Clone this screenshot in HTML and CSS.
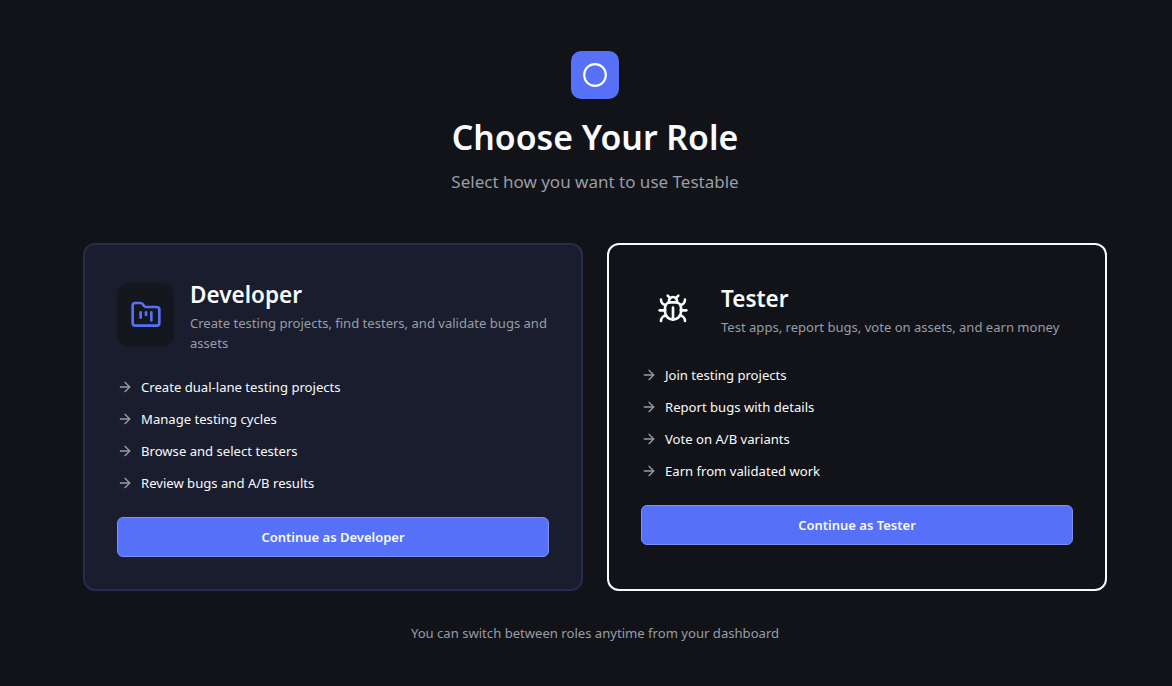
FILE: index.html
```html
<!DOCTYPE html>
<html lang="en">
<head>
    <meta charset="UTF-8">
    <meta name="viewport" content="width=device-width, initial-scale=1.0">
    <title>Choose Your Role</title>
    <link rel="stylesheet" href="styles.css">
</head>
<body>

<div class="container">
    <div class="header">
        <div class="logo">
            <svg class="logo-icon" viewBox="0 0 24 24"><circle cx="12" cy="12" r="10"></circle></svg>
        </div>
        <h1>Choose Your Role</h1>
        <p class="subtitle">Select how you want to use Testable</p>
    </div>

    <div class="roles">
        <div class="card card-developer">
            <div class="card-header">
                <div class="card-icon icon-developer">
                    <svg viewBox="0 0 24 24">
                        <path d="M4 20h16a2 2 0 0 0 2-2V8a2 2 0 0 0-2-2h-7.93a2 2 0 0 1-1.66-.9l-.82-1.2A2 2 0 0 0 7.93 3H4a2 2 0 0 0-2 2v13c0 1.1.9 2 2 2Z"></path>
                        <path d="M8 10v4"></path>
                        <path d="M12 10v2"></path>
                        <path d="M16 10v6"></path>
                    </svg>
                </div>
                <div>
                    <h2>Developer</h2>
                    <p class="card-desc">Create testing projects, find testers, and validate bugs and assets</p>
                </div>
            </div>
            <ul class="features">
                <li><svg viewBox="0 0 24 24"><path d="M5 12h14"></path><path d="m12 5 7 7-7 7"></path></svg>Create dual-lane testing projects</li>
                <li><svg viewBox="0 0 24 24"><path d="M5 12h14"></path><path d="m12 5 7 7-7 7"></path></svg>Manage testing cycles</li>
                <li><svg viewBox="0 0 24 24"><path d="M5 12h14"></path><path d="m12 5 7 7-7 7"></path></svg>Browse and select testers</li>
                <li><svg viewBox="0 0 24 24"><path d="M5 12h14"></path><path d="m12 5 7 7-7 7"></path></svg>Review bugs and A/B results</li>
            </ul>
            <button type="button">Continue as Developer</button>
        </div>

        <div class="card card-tester">
            <div class="card-header">
                <div class="card-icon icon-tester">
                    <svg viewBox="0 0 24 24">
                        <path d="m8 2 1.88 1.88"></path>
                        <path d="M14.12 3.88 16 2"></path>
                        <path d="M9 7.13v-1a3.003 3.003 0 1 1 6 0v1"></path>
                        <path d="M12 20c-3.3 0-6-2.7-6-6v-3a4 4 0 0 1 4-4h4a4 4 0 0 1 4 4v3c0 3.3-2.7 6-6 6"></path>
                        <path d="M12 20v-9"></path>
                        <path d="M6.53 9C4.6 8.8 3 7.1 3 5"></path>
                        <path d="M6 13H2"></path>
                        <path d="M3 21c0-2.1 1.7-3.9 3.8-4"></path>
                        <path d="M20.97 5c0 2.1-1.6 3.8-3.5 4"></path>
                        <path d="M22 13h-4"></path>
                        <path d="M17.2 17c2.1.1 3.8 1.9 3.8 4"></path>
                    </svg>
                </div>
                <div>
                    <h2>Tester</h2>
                    <p class="card-desc">Test apps, report bugs, vote on assets, and earn money</p>
                </div>
            </div>
            <ul class="features">
                <li><svg viewBox="0 0 24 24"><path d="M5 12h14"></path><path d="m12 5 7 7-7 7"></path></svg>Join testing projects</li>
                <li><svg viewBox="0 0 24 24"><path d="M5 12h14"></path><path d="m12 5 7 7-7 7"></path></svg>Report bugs with details</li>
                <li><svg viewBox="0 0 24 24"><path d="M5 12h14"></path><path d="m12 5 7 7-7 7"></path></svg>Vote on A/B variants</li>
                <li><svg viewBox="0 0 24 24"><path d="M5 12h14"></path><path d="m12 5 7 7-7 7"></path></svg>Earn from validated work</li>
            </ul>
            <button type="button">Continue as Tester</button>
        </div>
    </div>

    <p class="footnote">You can switch between roles anytime from your dashboard</p>
</div>

</body>
</html>
```

FILE: styles.css
```css
* {
    box-sizing: border-box;
}
html, body {
    height: 100%;
}
body {
    margin: 0;
    padding: 51px 0 0 18px;
    overflow: hidden;
    background: #111318;
    color: #f8fafc;
    font-family: "Noto Sans", "Liberation Sans", sans-serif;
}
svg {
    fill: none;
    stroke: currentColor;
    stroke-width: 2;
    stroke-linecap: round;
    stroke-linejoin: round;
}
.container {
    max-width: 1024px;
    margin: auto;
}
.header {
    display: flex;
    flex-direction: column;
    align-items: center;
    margin-bottom: 47px;
}
.logo {
    display: flex;
    justify-content: center;
    align-items: center;
    width: 48px;
    height: 48px;
    margin-bottom: 16px;
    border-radius: 10px;
    background: #5671f8;
    color: #fff;
}
.logo-icon {
    width: 26px;
    height: 26px;
}
h1 {
    margin: 0 0 11px;
    padding-top: 2px;
    font-size: 33.8px;
    line-height: 40px;
    font-weight: 600;
}
.subtitle {
    margin: 0;
    font-size: 17px;
    line-height: 28px;
    color: #989da6;
}
.roles {
    display: grid;
    grid-template-columns: 1fr 1fr;
    gap: 24px;
}
.card {
    display: flex;
    flex-direction: column;
    padding: 32px;
    border: 2px solid;
    border-radius: 12px;
}
.card-developer {
    background: #1a1d2e;
    border-color: #272c4e;
}
.card-tester {
    background: #111318;
    border-color: #f8fafc;
}
.card-header {
    display: flex;
    align-items: center;
    gap: 16px;
    margin-bottom: 24px;
}
.card-icon {
    display: flex;
    flex-shrink: 0;
    justify-content: center;
    align-items: center;
    width: 64px;
    height: 64px;
    border-radius: 12px;
}
.card-icon svg {
    width: 32px;
    height: 32px;
    flex-shrink: 0;
}
.icon-developer {
    width: 57px;
    background: #15171f;
    color: #5671f8;
}
.icon-tester {
    color: #f8fafc;
}
h2 {
    margin: 0 0 2px;
    padding-top: 2px;
    font-size: 22.5px;
    line-height: 32px;
    font-weight: 600;
}
.card-desc {
    margin: 0;
    font-size: 13.05px;
    line-height: 20px;
    color: #989da6;
}
.features {
    display: flex;
    flex-direction: column;
    gap: 12px;
    margin: 0 0 24px;
    padding: 0;
    list-style: none;
}
.features li {
    display: flex;
    align-items: center;
    gap: 8px;
    font-size: 13.1px;
    line-height: 20px;
}
.features svg {
    width: 16px;
    height: 16px;
    color: #989da6;
}
button {
    width: 100%;
    height: 40px;
    border: 1px solid #7b90fa;
    border-radius: 6px;
    background: #5671f8;
    color: #f8fafc;
    font-family: inherit;
    font-size: 13px;
    font-weight: 600;
    cursor: pointer;
}
.footnote {
    margin: 32px 0 0;
    text-align: center;
    font-size: 13.1px;
    line-height: 20px;
    color: #989da6;
}
```
